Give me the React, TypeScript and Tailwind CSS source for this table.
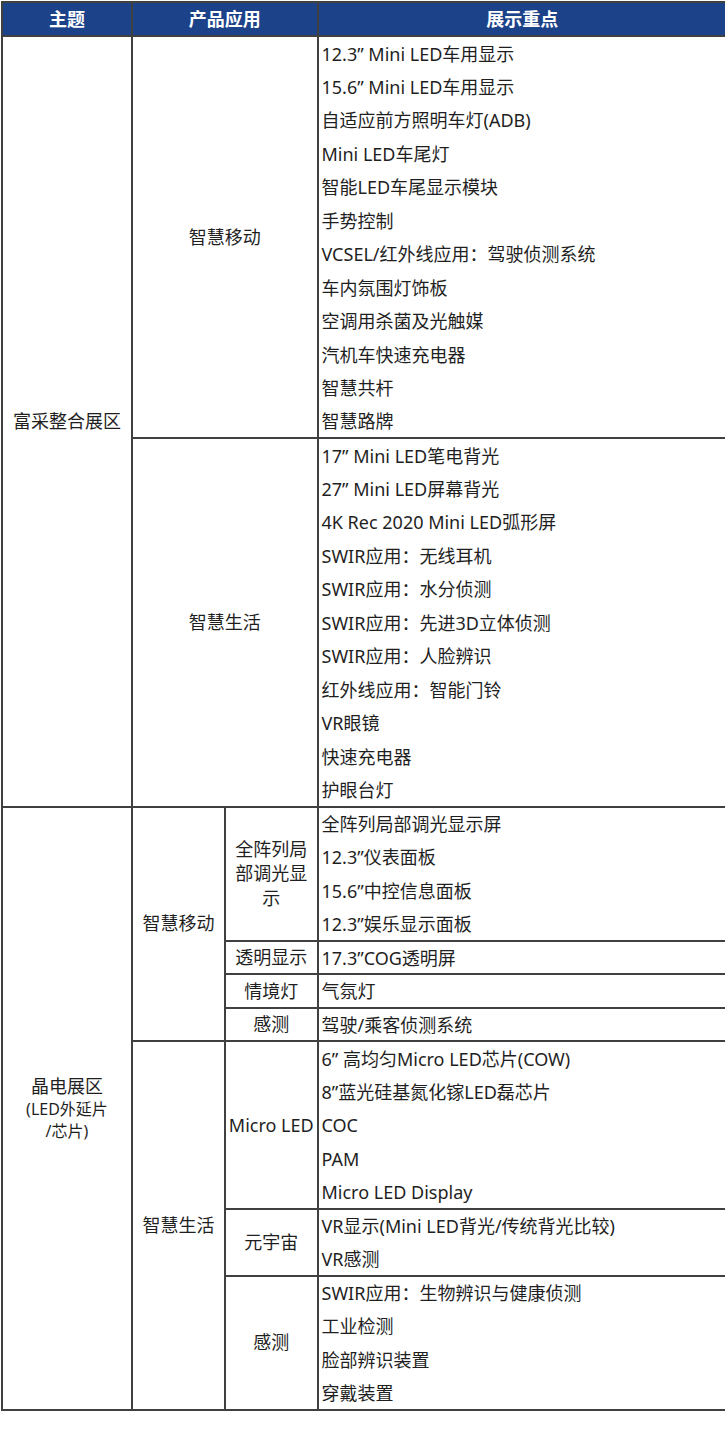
import React from 'react';

type Sub = { name: React.ReactNode; items: string[]; nowrap?: boolean };
type AppGroup = { name: string; items?: string[]; subs?: Sub[] };
type Section = { theme: React.ReactNode; apps: AppGroup[] };

const sections: Section[] = [
  {
    theme: '富采整合展区',
    apps: [
      {
        name: '智慧移动',
        items: [
          '12.3” Mini LED车用显示',
          '15.6” Mini LED车用显示',
          '自适应前方照明车灯(ADB)',
          'Mini LED车尾灯',
          '智能LED车尾显示模块',
          '手势控制',
          'VCSEL/红外线应用：驾驶侦测系统',
          '车内氛围灯饰板',
          '空调用杀菌及光触媒',
          '汽机车快速充电器',
          '智慧共杆',
          '智慧路牌',
        ],
      },
      {
        name: '智慧生活',
        items: [
          '17” Mini LED笔电背光',
          '27” Mini LED屏幕背光',
          '4K Rec 2020 Mini LED弧形屏',
          'SWIR应用：无线耳机',
          'SWIR应用：水分侦测',
          'SWIR应用：先进3D立体侦测',
          'SWIR应用：人脸辨识',
          '红外线应用：智能门铃',
          'VR眼镜',
          '快速充电器',
          '护眼台灯',
        ],
      },
    ],
  },
  {
    theme: (
      <div className="flex flex-col items-center">
        <span className="leading-[24px]">晶电展区</span>
        <span className="text-[16px] leading-[22px]">(LED外延片</span>
        <span className="text-[16px] leading-[22px]">/芯片)</span>
      </div>
    ),
    apps: [
      {
        name: '智慧移动',
        subs: [
          {
            name: '全阵列局部调光显示',
            items: ['全阵列局部调光显示屏', '12.3”仪表面板', '15.6”中控信息面板', '12.3”娱乐显示面板'],
          },
          { name: '透明显示', items: ['17.3”COG透明屏'] },
          { name: '情境灯', items: ['气氛灯'] },
          { name: '感测', items: ['驾驶/乘客侦测系统'] },
        ],
      },
      {
        name: '智慧生活',
        subs: [
          {
            name: 'Micro LED',
            nowrap: true,
            items: [
              '6” 高均匀Micro LED芯片(COW)',
              '8”蓝光硅基氮化镓LED磊芯片',
              'COC',
              'PAM',
              'Micro LED Display',
            ],
          },
          { name: '元宇宙', items: ['VR显示(Mini LED背光/传统背光比较)', 'VR感测'] },
          {
            name: '感测',
            items: ['SWIR应用：生物辨识与健康侦测', '工业检测', '脸部辨识装置', '穿戴装置'],
          },
        ],
      },
    ],
  },
];

const countApp = (a: AppGroup) =>
  a.subs ? a.subs.reduce((n, s) => n + s.items.length, 0) : (a.items?.length ?? 0);

const cell = 'border-2 border-[#404040] p-0 align-middle';
const centered = `${cell} text-center`;

// items inside one group share a cell look: no lines between them
const itemCell = (first: boolean, last: boolean) =>
  [
    'border-x-2 border-[#404040] p-0 pl-[3px] pt-[2px] align-middle whitespace-nowrap text-left',
    first ? 'border-t-2' : 'border-t-0',
    last ? 'border-b-2' : 'border-b-0',
  ].join(' ');

export default function App() {
  const rows: React.ReactNode[] = [];

  sections.forEach((sec, si) => {
    const secCount = sec.apps.reduce((n, a) => n + countApp(a), 0);
    let firstInSec = true;

    sec.apps.forEach((app, ai) => {
      const appCount = countApp(app);

      if (!app.subs) {
        const items = app.items ?? [];
        items.forEach((item, ii) => {
          rows.push(
            <tr key={`${si}-${ai}-${ii}`} className="h-[33.5px]">
              {firstInSec && (
                <td rowSpan={secCount} className={centered}>
                  {sec.theme}
                </td>
              )}
              {ii === 0 && (
                <td rowSpan={appCount} colSpan={2} className={centered}>
                  {app.name}
                </td>
              )}
              <td className={itemCell(ii === 0, ii === items.length - 1)}>{item}</td>
            </tr>
          );
          firstInSec = false;
        });
      } else {
        app.subs.forEach((sub, subi) => {
          sub.items.forEach((item, ii) => {
            rows.push(
              <tr key={`${si}-${ai}-${subi}-${ii}`} className="h-[33.5px]">
                {firstInSec && (
                  <td rowSpan={secCount} className={centered}>
                    {sec.theme}
                  </td>
                )}
                {subi === 0 && ii === 0 && (
                  <td rowSpan={appCount} className={centered}>
                    {app.name}
                  </td>
                )}
                {ii === 0 && (
                  <td
                    rowSpan={sub.items.length}
                    className={`${centered} leading-[24.5px] ${sub.nowrap ? 'whitespace-nowrap px-0' : 'px-[4px]'}`}
                  >
                    {sub.name}
                  </td>
                )}
                <td className={itemCell(ii === 0, ii === sub.items.length - 1)}>{item}</td>
              </tr>
            );
            firstInSec = false;
          });
        });
      }
    });
  });

  return (
    <div
      className="w-[725px] h-[1437px] overflow-hidden bg-white pt-[1px] pl-[1px] text-[18px] text-[#1f1f1f]"
      style={{ fontFamily: '"Noto Sans", "Noto Sans CJK SC", sans-serif' }}
    >
      <table className="w-[727px] table-fixed border-collapse">
        <colgroup>
          <col className="w-[130px]" />
          <col className="w-[93px]" />
          <col className="w-[92.5px]" />
          <col />
        </colgroup>
        <thead>
          <tr className="h-[34px] bg-[#1c4289] text-white font-bold">
            <th className={`${centered} border-[#2a2a2a]`}>主题</th>
            <th colSpan={2} className={`${centered} border-[#2a2a2a]`}>
              产品应用
            </th>
            <th className={`${centered} border-[#2a2a2a]`}>展示重点</th>
          </tr>
        </thead>
        <tbody>{rows}</tbody>
      </table>
    </div>
  );
}
